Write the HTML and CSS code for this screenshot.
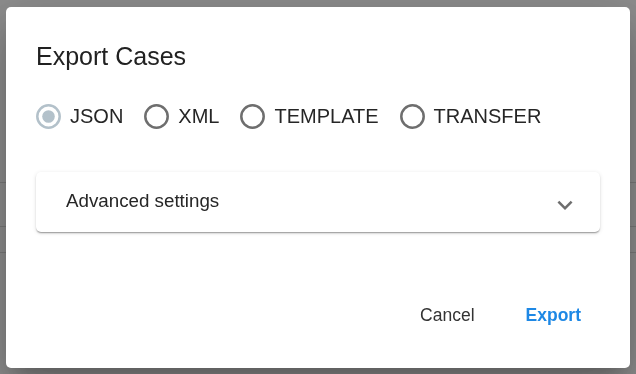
FILE: index.html
```html
<!DOCTYPE html>
<html>
<head>
<meta charset="utf-8">
<link rel="stylesheet" href="styles.css">
</head>
<body>
<div class="page">
  <div class="row row-a"></div>
  <div class="row row-b"></div>
  <div class="row row-c"></div>
  <div class="row row-d"></div>
</div>
<div class="backdrop">
  <div class="dialog" role="dialog">
    <h2 class="title">Export Cases</h2>
    <div class="radios">
      <label class="radio checked">
        <svg class="radio-icon" width="25" height="25" viewBox="0 0 25 25"><circle cx="12.5" cy="12.5" r="11.2" fill="none" stroke="currentColor" stroke-width="2.5"/><circle cx="12.5" cy="12.5" r="6.3" fill="currentColor"/></svg>
        <span class="radio-label">JSON</span>
      </label>
      <label class="radio">
        <svg class="radio-icon" width="25" height="25" viewBox="0 0 25 25"><circle cx="12.5" cy="12.5" r="11.2" fill="none" stroke="currentColor" stroke-width="2.5"/></svg>
        <span class="radio-label">XML</span>
      </label>
      <label class="radio">
        <svg class="radio-icon" width="25" height="25" viewBox="0 0 25 25"><circle cx="12.5" cy="12.5" r="11.2" fill="none" stroke="currentColor" stroke-width="2.5"/></svg>
        <span class="radio-label">TEMPLATE</span>
      </label>
      <label class="radio">
        <svg class="radio-icon" width="25" height="25" viewBox="0 0 25 25"><circle cx="12.5" cy="12.5" r="11.2" fill="none" stroke="currentColor" stroke-width="2.5"/></svg>
        <span class="radio-label">TRANSFER</span>
      </label>
    </div>
    <div class="accordion">
      <span class="accordion-text">Advanced settings</span>
      <svg class="expand-icon" width="30" height="30" viewBox="0 0 24 24"><path fill="currentColor" d="M16.59 8.59 12 13.17 7.41 8.59 6 10l6 6 6-6z"/></svg>
    </div>
    <div class="actions">
      <button class="btn btn-cancel">Cancel</button>
      <button class="btn btn-primary">Export</button>
    </div>
  </div>
</div>
</body>
</html>
```

FILE: styles.css
```css
html, body {
  margin: 0;
  padding: 0;
  background: #ffffff;
  font-family: "Liberation Sans", Arial, sans-serif;
}
.page {
  width: 636px;
  height: 374px;
  overflow: hidden;
  padding-top: 140px;
  box-sizing: border-box;
}
.row {
  border-bottom: 1px solid #dcdcdc;
}
.row-a { height: 42px; }
.row-b { height: 43px; }
.row-c { height: 25px; }
.row-d { height: 60px; border-bottom: none; }

.backdrop {
  position: fixed;
  inset: 0;
  background: rgba(0, 0, 0, 0.45);
  display: flex;
  align-items: flex-start;
  padding: 7px 0 0 6px;
}
.dialog {
  width: 624px;
  box-sizing: border-box;
  background: #ffffff;
  border-radius: 5px;
  padding: 29px 30px 30px;
  box-shadow: 0 14px 19px -9px rgba(0,0,0,0.2), 0 30px 47px 4px rgba(0,0,0,0.14), 0 11px 57px 10px rgba(0,0,0,0.12);
  color: rgba(0, 0, 0, 0.87);
}
.title {
  margin: 0;
  font-size: 25px;
  line-height: 40px;
  font-weight: 400;
  color: #212121;
}
.radios {
  display: flex;
  align-items: center;
  height: 52px;
  margin-top: 14px;
}
.radio {
  display: flex;
  align-items: center;
  gap: 9px;
  margin-right: 21px;
  color: #6e6e6e;
}
.radio.checked {
  color: #b3c1ca;
}
.radio-icon {
  display: block;
  flex: none;
}
.radio-label {
  font-size: 20px;
  line-height: 24px;
  color: #262626;
}
.accordion {
  margin-top: 30px;
  height: 60px;
  border-radius: 5px;
  background: #ffffff;
  box-shadow: 0 2px 2px -1px rgba(0,0,0,0.25), 0 1px 1px 0 rgba(0,0,0,0.14), 0 1px 4px 0 rgba(0,0,0,0.12);
  display: flex;
  align-items: center;
  justify-content: space-between;
  padding: 0 20px 0 30px;
}
.accordion-text {
  font-size: 18.75px;
  line-height: 24px;
  color: #262626;
  margin-top: -3px;
}
.expand-icon {
  display: block;
  color: #6e6e6e;
  margin-top: 6px;
}
.actions {
  margin-top: 60px;
  display: flex;
  justify-content: flex-end;
  gap: 25px;
  padding-right: 6px;
}
.btn {
  font-family: "Liberation Sans", Arial, sans-serif;
  font-size: 17.5px;
  height: 46px;
  min-width: 80px;
  padding: 0 13px;
  border: none;
  background: transparent;
  cursor: pointer;
}
.btn-cancel {
  color: #333333;
  font-weight: 400;
}
.btn-primary {
  color: #1e88e5;
  font-weight: 700;
}
```
